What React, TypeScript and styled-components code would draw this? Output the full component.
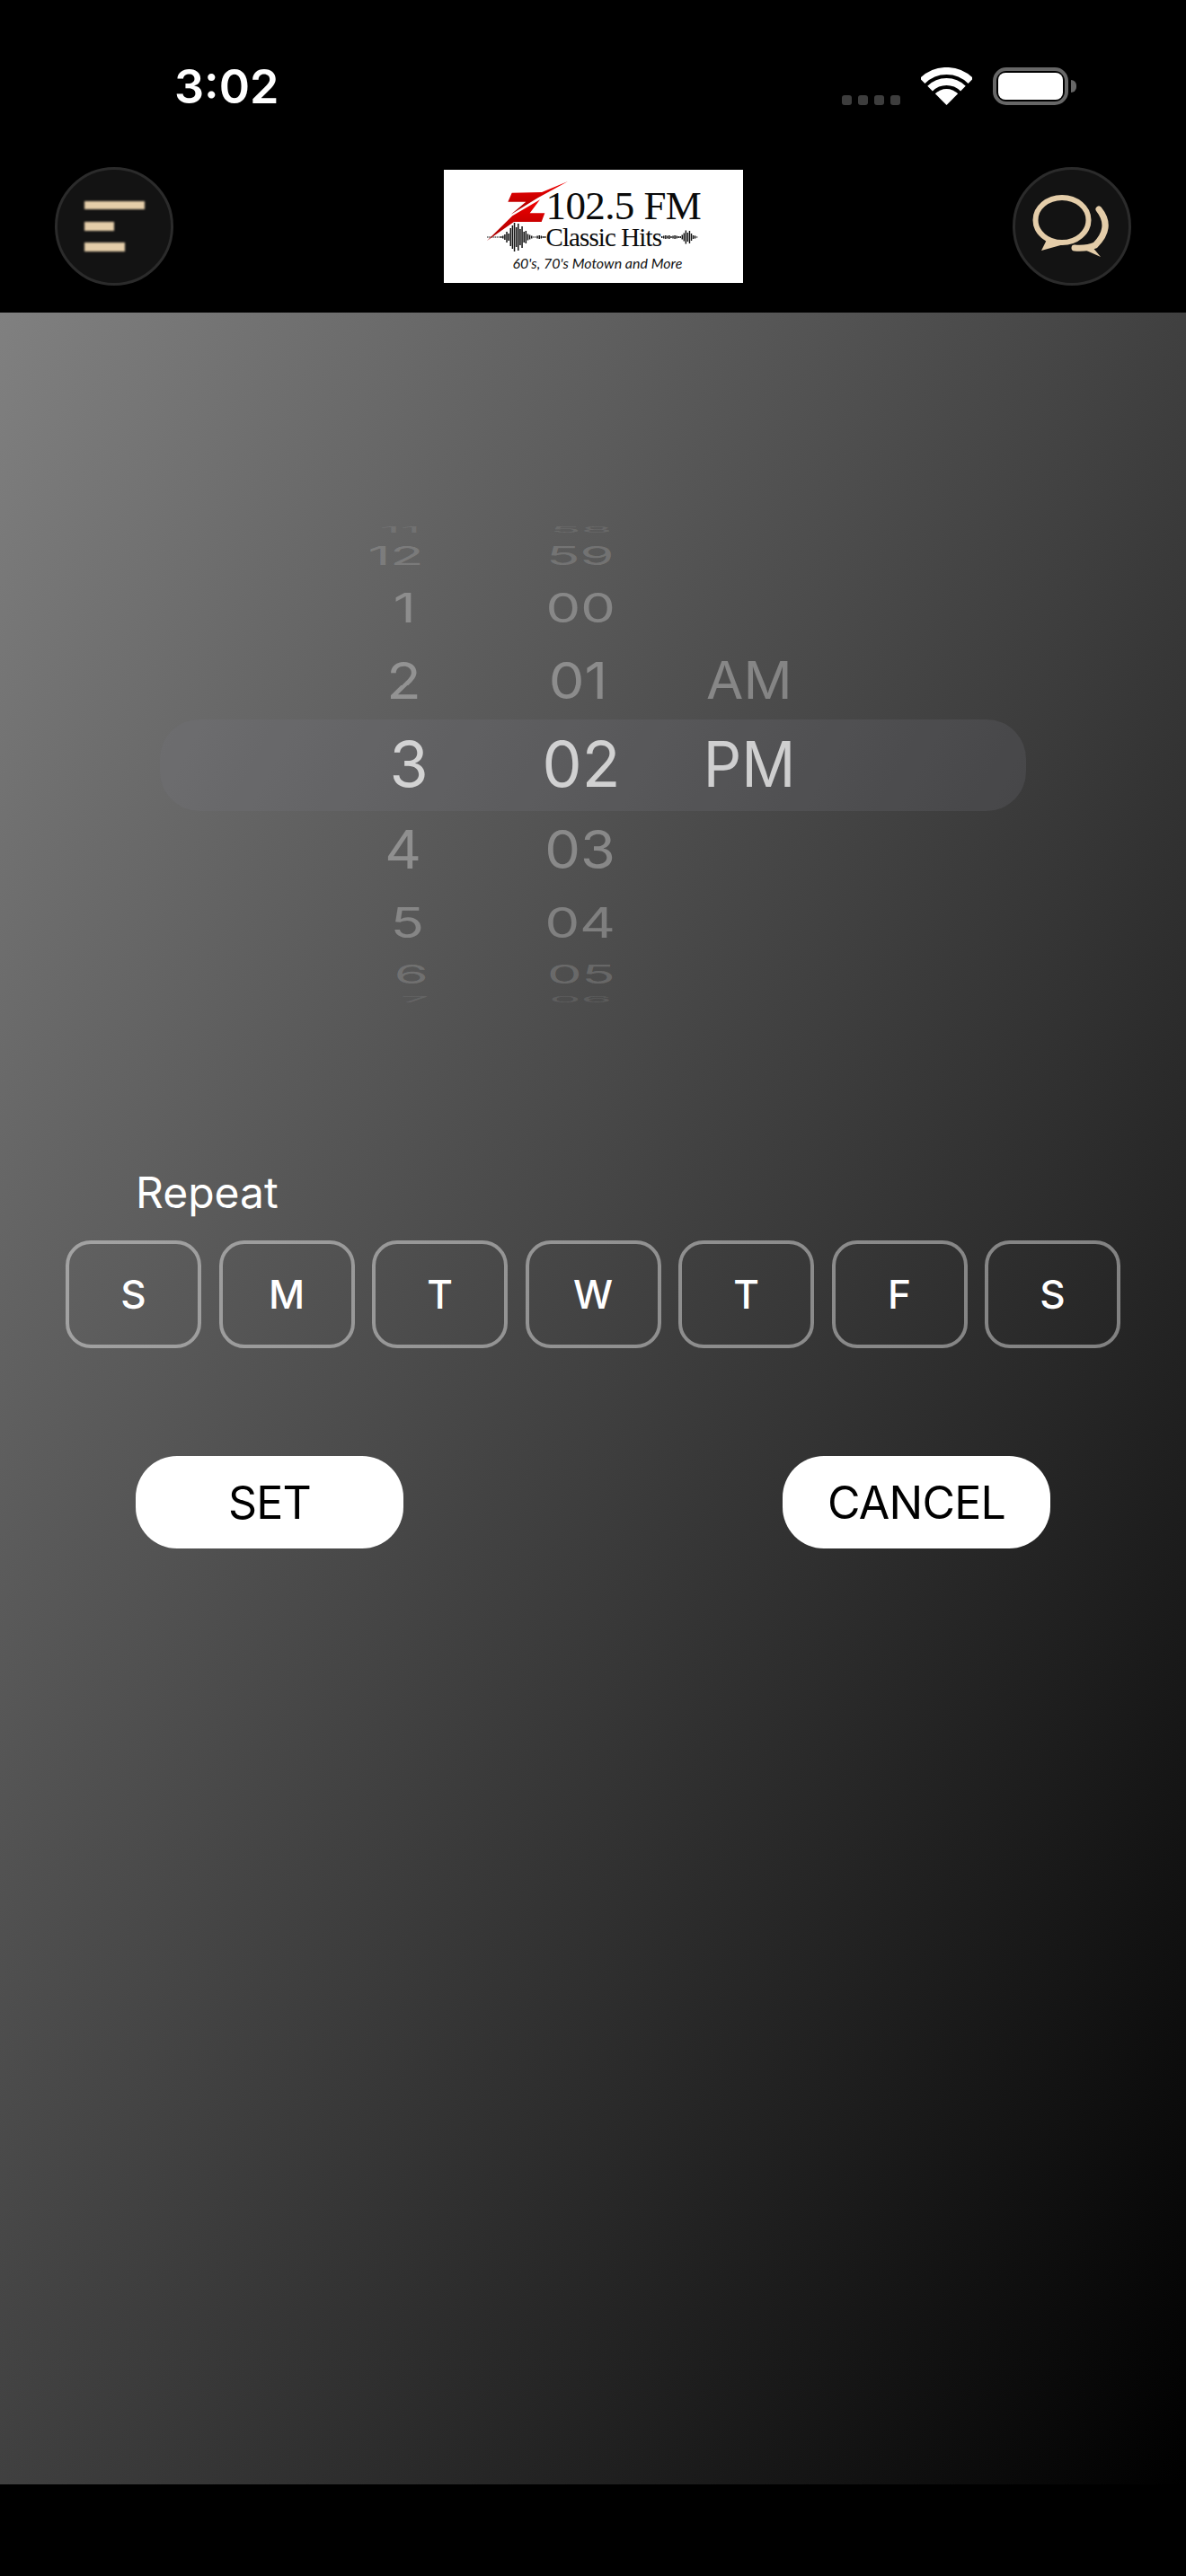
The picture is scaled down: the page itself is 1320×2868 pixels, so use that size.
import React from 'react';
import styled, { createGlobalStyle } from 'styled-components';

const GlobalStyle = createGlobalStyle`
    html, body {
        margin: 0;
        padding: 0;
        background: #000;
    }
`;

const Screen = styled.div`
    width: 1320px;
    height: 2868px;
    display: flex;
    flex-direction: column;
    background: #000;
    font-family: Inter, "Liberation Sans", sans-serif;
    overflow: hidden;
`;

const StatusBar = styled.div`
    height: 42px;
    margin-top: 75px;
    padding: 0 122px 0 194px;
    display: flex;
    align-items: flex-end;
`;

const Clock = styled.span`
    font-size: 52px;
    font-weight: 600;
    line-height: 42px;
    color: #fff;
    margin-right: auto;
    position: relative;
    top: 1px;
`;

const SignalDots = styled.div`
    display: flex;
    gap: 7px;
    margin-right: 23px;
`;

const SignalDot = styled.span`
    width: 11px;
    height: 11px;
    border-radius: 3px;
    background: #3d3d3d;
`;

const Battery = styled.div`
    margin-left: 23px;
    display: flex;
    align-items: center;
`;

const BatteryShell = styled.div`
    width: 84px;
    height: 42px;
    box-sizing: border-box;
    padding: 2px;
    border: 4px solid #676767;
    border-radius: 15px;
`;

const BatteryFill = styled.div`
    height: 100%;
    background: #fff;
    border-radius: 8px;
`;

const BatteryNub = styled.div`
    width: 6px;
    height: 14px;
    margin-left: 3px;
    background: #676767;
    border-radius: 0 6px 6px 0;
`;

const NavBar = styled.div`
    height: 132px;
    margin-top: 69px;
    margin-bottom: 30px;
    padding: 0 61px;
    display: flex;
    justify-content: space-between;
    align-items: center;
`;

const RoundButton = styled.button`
    width: 132px;
    height: 132px;
    padding: 0;
    box-sizing: border-box;
    border: 3px solid #2b2b2b;
    border-radius: 50%;
    background: #131313;
    display: flex;
    align-items: center;
    justify-content: center;
`;

const MenuGlyph = styled.svg`
    filter: blur(0.8px);
`;

const LogoBox = styled.div`
    position: relative;
    width: 333px;
    height: 126px;
    background: #fff;
    display: flex;
    flex-direction: column;
    align-items: flex-start;
`;

const LogoZ = styled.svg`
    position: absolute;
    left: 48px;
    top: 13px;
`;

const LogoFreq = styled.div`
    margin: 22px 0 0 114px;
    font-family: "Liberation Serif", serif;
    font-size: 45px;
    line-height: 36px;
    letter-spacing: -0.6px;
    white-space: nowrap;
    color: #0a0a0a;
`;

const LogoClassicRow = styled.div`
    margin: 1px 0 0 48px;
    height: 32px;
    display: flex;
    align-items: center;
`;

const LogoClassic = styled.span`
    font-family: "Liberation Serif", serif;
    font-size: 29px;
    line-height: 32px;
    letter-spacing: -0.9px;
    white-space: nowrap;
    color: #0a0a0a;
`;

const LogoTagline = styled.div`
    margin: 3px 0 0 77px;
    font-family: Lato, sans-serif;
    font-style: italic;
    font-size: 16px;
    line-height: 20px;
    white-space: nowrap;
    color: #111;
`;

const Main = styled.main`
    height: 2418px;
    display: flex;
    flex-direction: column;
    background: linear-gradient(to bottom right, #808080, #000);
`;

const WheelArea = styled.div`
    position: relative;
    margin-top: 229px;
    padding-left: 359px;
    display: flex;
`;

const SelectionBand = styled.div`
    position: absolute;
    left: 178px;
    right: 178px;
    top: 224px;
    height: 102px;
    border-radius: 44px;
    background: rgba(118, 118, 128, 0.2);
`;

const WheelColumn = styled.div`
    position: relative;
    width: 190px;
    display: flex;
    flex-direction: column;
`;

const WheelCell = styled.div<{ $height: number }>`
    height: ${(props) => props.$height}px;
    display: flex;
    align-items: center;
    justify-content: center;
`;

const WheelText = styled.span<{ $sx: number; $sy: number; $dx: number; $alpha: number }>`
    font-size: 70px;
    line-height: 70px;
    font-weight: 400;
    white-space: nowrap;
    color: rgba(255, 255, 255, ${(props) => props.$alpha});
    transform: translateX(${(props) => props.$dx}px) scale(${(props) => props.$sx}, ${(props) => props.$sy});
`;

const RepeatLabel = styled.div`
    margin: 176px 0 0 151px;
    font-size: 48px;
    line-height: 60px;
    color: #fff;
`;

const DayRow = styled.div`
    margin-top: 23px;
    padding: 0 73px;
    display: flex;
    justify-content: space-between;
`;

const DayButton = styled.button`
    width: 151px;
    height: 120px;
    padding: 0;
    box-sizing: border-box;
    border: 4px solid rgba(255, 255, 255, 0.42);
    border-radius: 28px;
    background: transparent;
    color: #fff;
    font-family: inherit;
    font-size: 44px;
    font-weight: 500;
`;

const ActionRow = styled.div`
    margin-top: 120px;
    padding: 0 151px;
    display: flex;
    justify-content: space-between;
`;

const ActionButton = styled.button`
    width: 298px;
    height: 103px;
    padding: 0;
    border: none;
    border-radius: 46px;
    background: #fff;
    color: #000;
    font-family: inherit;
    font-size: 50px;
    font-weight: 400;
    letter-spacing: -0.8px;
`;

const ROWS = [
    { height: 26, sx: 0.8, sy: 0.137, alpha: 0.1 },
    { height: 32, sx: 0.875, sy: 0.41, alpha: 0.18 },
    { height: 83, sx: 0.875, sy: 0.65, alpha: 0.28 },
    { height: 80, sx: 0.9, sy: 0.82, alpha: 0.32 },
    { height: 105, sx: 1, sy: 1, alpha: 0.72 },
    { height: 85, sx: 0.9, sy: 0.84, alpha: 0.32 },
    { height: 78, sx: 0.875, sy: 0.67, alpha: 0.28 },
    { height: 37, sx: 0.875, sy: 0.41, alpha: 0.18 },
    { height: 19, sx: 0.8, sy: 0.137, alpha: 0.1 },
];

const HOURS = ['11', '12', '1', '2', '3', '4', '5', '6', '7'];
const HOUR_SHIFT = [-9, -13, -4, -5, 1, -5, -1, 4, 8];
const MINUTES = ['58', '59', '00', '01', '02', '03', '04', '05', '06'];
const MINUTE_SHIFT = [3, 2, 2, -1, 3, 2, 2, 2.5, 2.5];
const PERIODS = ['', '', '', 'AM', 'PM', '', '', '', ''];
const DAYS = ['S', 'M', 'T', 'W', 'T', 'F', 'S'];

const LEFT_WAVE = [1, 1, 1, 1, 1, 1, 1, 2, 3, 6, 12, 8, 20, 26, 32, 22, 30, 18, 24, 12, 14, 7, 5, 3, 1, 1, 3, 4, 3, 2, 2];
const RIGHT_WAVE = [2, 3, 4, 3, 4, 2, 3, 4, 3, 2, 2, 5, 9, 15, 10, 14, 8, 4, 3, 1];

const Wave: React.FC<{ bars: number[]; width: number; height: number }> = ({ bars, width, height }) => {
    const step = width / bars.length;
    return (
        <svg width={width} height={height} viewBox={`0 0 ${width} ${height}`}>
            {bars.map((bar, i) => (
                <rect key={i} x={i * step} y={(height - bar) / 2} width={step * 0.7} height={bar} fill="#111" />
            ))}
        </svg>
    );
};

const Column: React.FC<{ items: string[]; shifts?: number[]; narrow?: number }> = ({ items, shifts, narrow = 1 }) => (
    <WheelColumn>
        {ROWS.map((row, i) => (
            <WheelCell key={i} $height={row.height}>
                {items[i] && (
                    <WheelText $sx={row.sx * narrow} $sy={row.sy} $dx={shifts ? shifts[i] : 0} $alpha={row.alpha}>
                        {items[i]}
                    </WheelText>
                )}
            </WheelCell>
        ))}
    </WheelColumn>
);

const App: React.FC = () => (
    <Screen>
        <GlobalStyle />
        <StatusBar>
            <Clock>3:02</Clock>
            <SignalDots>
                <SignalDot />
                <SignalDot />
                <SignalDot />
                <SignalDot />
            </SignalDots>
            <svg width="57" height="42" viewBox="0 0 57 42">
                <path d="M1.6 15.1A38 38 0 0 1 55.4 15.1" fill="none" stroke="#fff" strokeWidth="8" />
                <path d="M10.1 23.6A26 26 0 0 1 46.9 23.6" fill="none" stroke="#fff" strokeWidth="8" />
                <path d="M28.5 42L15.8 29.3A18 18 0 0 1 41.2 29.3Z" fill="#fff" />
            </svg>
            <Battery>
                <BatteryShell>
                    <BatteryFill />
                </BatteryShell>
                <BatteryNub />
            </Battery>
        </StatusBar>

        <NavBar>
            <RoundButton>
                <MenuGlyph width="67" height="56" viewBox="0 0 67 56">
                    <rect x="0" y="0" width="67" height="9" fill="#e4cda9" />
                    <rect x="0" y="23" width="33" height="10" fill="#e4cda9" />
                    <rect x="0" y="46" width="45" height="10" fill="#e4cda9" />
                </MenuGlyph>
            </RoundButton>

            <LogoBox>
                <LogoZ width="90" height="66" viewBox="215 97 270 198">
                    <defs>
                        <linearGradient id="zRed" x1="0" y1="0" x2="0" y2="1">
                            <stop offset="0" stopColor="#f40000" />
                            <stop offset="1" stopColor="#a50000" />
                        </linearGradient>
                    </defs>
                    <path d="M285 165L298 135L398 133L485 97L385 152L295 207L345 165Z" fill="url(#zRed)" />
                    <path d="M215 295L300 212L392 158L358 203L408 203L397 232L305 232Z" fill="url(#zRed)" />
                </LogoZ>
                <LogoFreq>102.5 FM</LogoFreq>
                <LogoClassicRow>
                    <Wave bars={LEFT_WAVE} width={66} height={32} />
                    <LogoClassic>Classic Hits</LogoClassic>
                    <Wave bars={RIGHT_WAVE} width={41} height={16} />
                </LogoClassicRow>
                <LogoTagline>60's, 70's Motown and More</LogoTagline>
            </LogoBox>

            <RoundButton>
                <svg width="126" height="126" viewBox="3 3 126 126">
                    <ellipse cx="55" cy="59" rx="29.5" ry="25" fill="none" stroke="#e4cda9" strokeWidth="6" />
                    <path d="M39 79L32 93L57 86Z" fill="#e4cda9" />
                    <path d="M96 47Q112 67 92 87Q83 91 69 90" fill="none" stroke="#e4cda9" strokeWidth="7" strokeLinecap="round" />
                    <path d="M88 88L98 100L80 92Z" fill="#e4cda9" />
                </svg>
            </RoundButton>
        </NavBar>

        <Main>
            <WheelArea>
                <SelectionBand />
                <Column items={HOURS} shifts={HOUR_SHIFT} />
                <Column items={MINUTES} shifts={MINUTE_SHIFT} />
                <Column items={PERIODS} narrow={0.95} />
            </WheelArea>

            <RepeatLabel>Repeat</RepeatLabel>
            <DayRow>
                {DAYS.map((day, i) => (
                    <DayButton key={i}>{day}</DayButton>
                ))}
            </DayRow>

            <ActionRow>
                <ActionButton>SET</ActionButton>
                <ActionButton>CANCEL</ActionButton>
            </ActionRow>
        </Main>
    </Screen>
);

export default App;
